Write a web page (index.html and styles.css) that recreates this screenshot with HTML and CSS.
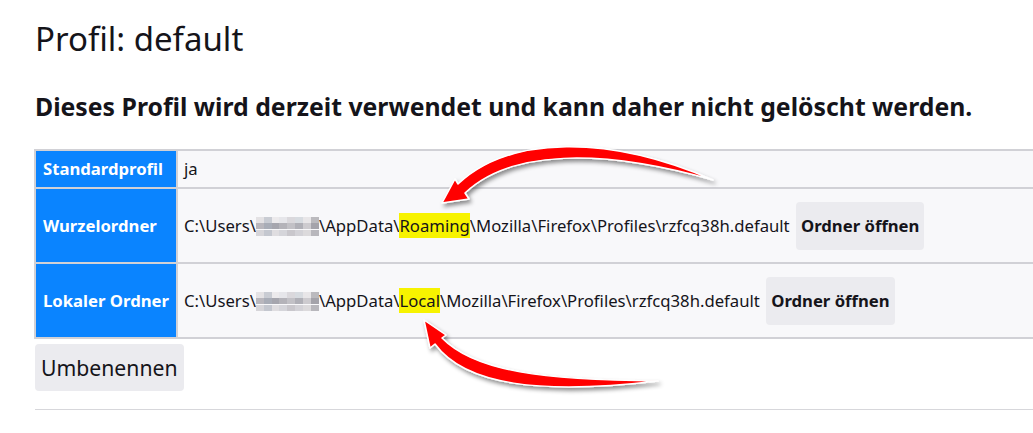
FILE: index.html
```html
<!DOCTYPE html>
<html lang="de">
<head>
    <meta charset="utf-8">
    <title>Profil: default</title>
    <link rel="stylesheet" href="styles.css">
</head>
<body>
    <div class="page">
        <h1>Profil: default</h1>
        <h2>Dieses Profil wird derzeit verwendet und kann daher nicht gelöscht werden.</h2>

        <table class="profile-table">
            <tr>
                <th>Standardprofil</th>
                <td>ja</td>
            </tr>
            <tr>
                <th>Wurzelordner</th>
                <td>C:\Users\<span class="blur"></span>\AppData\<mark>Roaming</mark>\Mozilla\Firefox\Profiles\rzfcq38h.default <button class="btn">Ordner öffnen</button></td>
            </tr>
            <tr>
                <th>Lokaler Ordner</th>
                <td>C:\Users\<span class="blur"></span>\AppData\<mark>Local</mark>\Mozilla\Firefox\Profiles\rzfcq38h.default <button class="btn">Ordner öffnen</button></td>
            </tr>
        </table>

        <button class="btn btn-rename">Umbenennen</button>
        <hr>
    </div>

    <!-- Markierungspfeile -->
    <svg class="arrows" width="1033" height="433" viewBox="0 0 1033 433">
        <defs>
            <filter id="shadow" x="-10%" y="-30%" width="130%" height="180%">
                <feDropShadow dx="2" dy="3" stdDeviation="2" flood-color="#000" flood-opacity="0.45"/>
            </filter>
        </defs>
        <path class="arrow" filter="url(#shadow)"
              d="M713,180 C610,135 510,135 458,184 L455,179 L442,203 L469,199 L465,193 C510,150 600,148 713,180 Z"/>
        <path class="arrow" filter="url(#shadow)"
              d="M424,320 L446,335 L442,338 C475,372 545,380 658,381 C540,395 465,385 435,344 L430,348 Z"/>
    </svg>
</body>
</html>
```

FILE: styles.css
```css
html, body {
    margin: 0;
    overflow: hidden;
}
body {
    font-family: "Noto Sans", "Open Sans", sans-serif;
    color: #15141a;
    background-color: #fff;
    font-size: 16.7px;
    position: relative;
}
.page {
    padding: 0 0 0 35px;
}
h1 {
    font-size: 33px;
    font-weight: 400;
    margin: 0;
    padding-top: 16px;
    line-height: 46px;
}
h2 {
    font-size: 24.8px;
    font-weight: 700;
    margin: 28px 0 27px;
    line-height: 32px;
}
.profile-table {
    border-collapse: collapse;
    width: 1020px;
    margin-left: -1px;
}
.profile-table th,
.profile-table td {
    border: 2px solid #d1d1d6;
    padding: 7px 6px;
    line-height: 22px;
    vertical-align: middle;
    white-space: nowrap;
}
.profile-table th {
    background-color: #0a84ff;
    color: #fff;
    text-align: left;
    padding-left: 7px;
    width: 127px;
}
.profile-table td {
    background-color: #f8f8fa;
}
mark {
    background-color: #f7f300;
    color: inherit;
    padding: 1px 0;
}
.blur {
    display: inline-block;
    width: 63px;
    height: 19px;
    vertical-align: -4px;
    background:
        linear-gradient(90deg, #e4e2e4 0 12%, #c9ccd3 12% 25%, #eceaec 25% 37%, #e6e6ea 37% 50%, #dad8dc 50% 62%, #d7dbe0 62% 75%, #e8e6e8 75% 88%, #bbbabe 88% 100%) top / 100% 33% no-repeat,
        linear-gradient(90deg, #b9b7bd 0 12%, #a9adb7 12% 25%, #a6a6ae 25% 37%, #b4b3b9 37% 50%, #c2c1c6 50% 62%, #b0b0b7 62% 75%, #cdcbcf 75% 88%, #a4a3aa 88% 100%) center / 100% 34% no-repeat,
        linear-gradient(90deg, #d6d5d9 0 12%, #c4c7cf 12% 25%, #dfdde0 25% 37%, #d5d5da 37% 50%, #c9c7cc 50% 62%, #d3d2d7 62% 75%, #dcdadc 75% 88%, #b8b7bc 88% 100%) bottom / 100% 33% no-repeat;
}
.btn {
    font-family: inherit;
    font-size: 16.7px;
    font-weight: 700;
    color: #15141a;
    background-color: #ebebef;
    border: none;
    border-radius: 4px;
    padding: 13px 5px;
    margin: 6px 0 5px 2px;
    line-height: 22px;
}
.btn-rename {
    font-size: 21.2px;
    font-weight: 400;
    padding: 9px 6px;
    margin: 5px 0 0;
    line-height: 29px;
}
hr {
    border: none;
    border-top: 1px solid #d7d7db;
    margin: 18px 0 0;
}
.arrows {
    position: absolute;
    left: 0;
    top: 0;
    pointer-events: none;
}
.arrow {
    fill: #ff0000;
    stroke: #fff;
    stroke-width: 1.5;
    stroke-linejoin: round;
}
```
